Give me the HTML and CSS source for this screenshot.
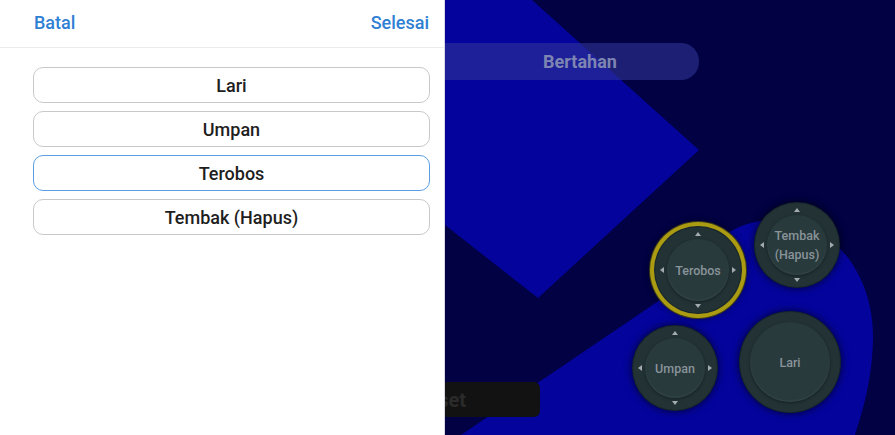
FILE: index.html
```html
<!DOCTYPE html>
<html lang="id">
<head>
<meta charset="utf-8">
<title>Atur tombol</title>
<link rel="stylesheet" href="styles.css">
</head>
<body>
<div class="screen">
  <aside class="sheet">
    <header class="sheet-head">
      <span class="head-btn">Batal</span>
      <span class="head-btn">Selesai</span>
    </header>
    <div class="option-list">
      <div class="option">Lari</div>
      <div class="option">Umpan</div>
      <div class="option option-active">Terobos</div>
      <div class="option">Tembak (Hapus)</div>
    </div>
  </aside>
  <main class="game">
    <svg class="field" viewBox="0 0 450 435" preserveAspectRatio="none" aria-hidden="true">
      <rect x="0" y="0" width="450" height="435" fill="#010143"/>
      <polygon points="0,0 87,0 254,150 93,298 0,225" fill="#04049c"/>
      <path d="M 16 435 L 215 300 C 245 270, 270 230, 310 222 C 380 208, 430 270, 428 340 C 427 380, 418 410, 410 435 Z" fill="#04049c"/>
    </svg>
    <div class="mode-pill">Bertahan</div>
    <div class="reset-pill">Reset</div>

    <div class="pad pad-terobos">
      <div class="pad-inner"><span class="pad-label">Terobos</span></div>
      <i class="arr arr-up"></i><i class="arr arr-down"></i><i class="arr arr-left"></i><i class="arr arr-right"></i>
    </div>
    <div class="pad pad-tembak">
      <div class="pad-inner"><span class="pad-label">Tembak<br>(Hapus)</span></div>
      <i class="arr arr-up"></i><i class="arr arr-down"></i><i class="arr arr-left"></i><i class="arr arr-right"></i>
    </div>
    <div class="pad pad-umpan">
      <div class="pad-inner"><span class="pad-label">Umpan</span></div>
      <i class="arr arr-up"></i><i class="arr arr-down"></i><i class="arr arr-left"></i><i class="arr arr-right"></i>
    </div>
    <div class="pad pad-lari">
      <div class="pad-inner pad-inner-wide"><span class="pad-label">Lari</span></div>
    </div>
  </main>
</div>
</body>
</html>
```

FILE: styles.css
```css
* { box-sizing: border-box; }
html, body { margin: 0; padding: 0; }
body {
  width: 895px;
  height: 435px;
  overflow: hidden;
  font-family: Roboto, "Noto Sans", "Liberation Sans", sans-serif;
}
.screen {
  display: flex;
  width: 895px;
  height: 435px;
}
.sheet {
  width: 445px;
  flex: none;
  background: #ffffff;
  border-right: 1px solid #d9d9e6;
  position: relative;
  z-index: 2;
}
.sheet-head {
  height: 48px;
  display: flex;
  align-items: center;
  justify-content: space-between;
  padding: 0 15px 2px 34px;
  border-bottom: 1px solid #ececec;
}
.head-btn {
  color: #2f7fd4;
  font-size: 18px;
  font-weight: 500;
}
.option-list {
  display: flex;
  flex-direction: column;
  gap: 8px;
  padding: 19px 14px 0 33px;
}
.option {
  height: 36px;
  border: 1.5px solid #c9c9c9;
  border-radius: 10px;
  display: flex;
  align-items: center;
  justify-content: center;
  font-size: 18px;
  font-weight: 500;
  color: #1e1e1e;
}
.option-active {
  border-color: #5b9ee2;
}
.game {
  flex: 1;
  position: relative;
  overflow: hidden;
  background: #010143;
}
.field {
  position: absolute;
  left: 0;
  top: 0;
  width: 450px;
  height: 435px;
  display: block;
}
.mode-pill {
  position: absolute;
  left: -40px;
  top: 43px;
  width: 294px;
  height: 37px;
  border-radius: 18px;
  background: rgba(46, 52, 150, 0.6);
  color: #7e85b2;
  font-size: 18px;
  font-weight: 700;
  display: flex;
  align-items: center;
  justify-content: center;
  padding-left: 56px;
}
.reset-pill {
  position: absolute;
  left: -90px;
  top: 382px;
  width: 185px;
  height: 35px;
  border-radius: 6px;
  background: #121212;
  color: #2a2a2a;
  font-size: 20px;
  font-weight: 700;
  display: flex;
  align-items: center;
  justify-content: flex-end;
  padding-right: 74px;
}
.pad {
  position: absolute;
  border-radius: 50%;
  background: #223235;
  box-shadow: 0 0 0 1px #17262a, 0 0 7px 2px rgba(0, 0, 0, 0.55);
  display: flex;
  align-items: center;
  justify-content: center;
}
.pad-inner {
  width: 72%;
  height: 72%;
  border-radius: 50%;
  background: #283a3c;
  box-shadow: inset 0 -1px 2px rgba(120, 140, 140, 0.18), 0 1px 3px rgba(0, 0, 0, 0.35);
  display: flex;
  align-items: center;
  justify-content: center;
}
.pad-inner-wide {
  width: 80%;
  height: 80%;
}
.pad-label {
  color: #89939a;
  font-size: 12.5px;
  font-weight: 500;
  line-height: 19px;
  text-align: center;
}
.pad-terobos {
  left: 210px;
  top: 227px;
  width: 86px;
  height: 86px;
  box-shadow: 0 0 0 1px #17262a, 0 0 0 5px #ab9b12, 0 0 0 6px #3d3b1a, 0 0 6px 6px rgba(0, 0, 0, 0.4);
}
.pad-tembak {
  left: 310px;
  top: 203px;
  width: 84px;
  height: 84px;
}
.pad-umpan {
  left: 188px;
  top: 326px;
  width: 84px;
  height: 84px;
}
.pad-lari {
  left: 295px;
  top: 312px;
  width: 100px;
  height: 100px;
}
.arr {
  position: absolute;
  width: 0;
  height: 0;
  border-style: solid;
}
.arr-up {
  top: 5px;
  left: 50%;
  margin-left: -3px;
  border-width: 0 3px 4px 3px;
  border-color: transparent transparent #a3abae transparent;
}
.arr-down {
  bottom: 5px;
  left: 50%;
  margin-left: -3px;
  border-width: 4px 3px 0 3px;
  border-color: #a3abae transparent transparent transparent;
}
.arr-left {
  left: 5px;
  top: 50%;
  margin-top: -3px;
  border-width: 3px 4px 3px 0;
  border-color: transparent #a3abae transparent transparent;
}
.arr-right {
  right: 5px;
  top: 50%;
  margin-top: -3px;
  border-width: 3px 0 3px 4px;
  border-color: transparent transparent transparent #a3abae;
}
```
